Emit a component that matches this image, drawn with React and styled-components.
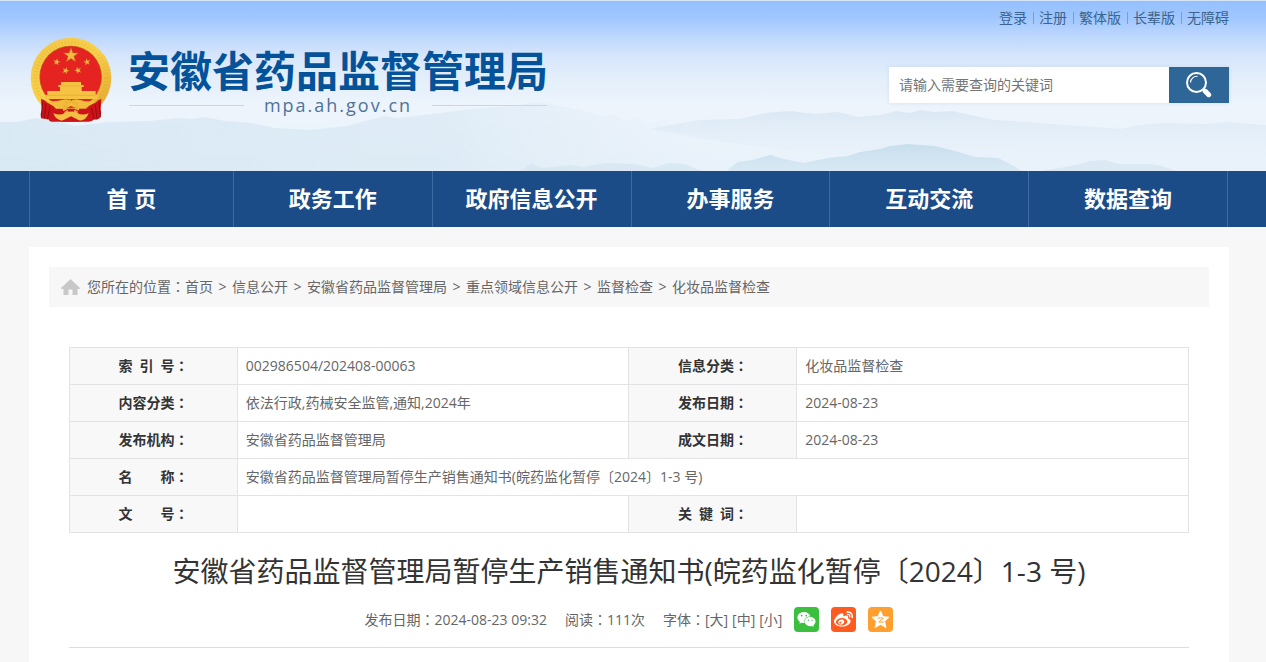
import React, { useState } from "react";
import styled, { createGlobalStyle } from "styled-components";
import { FaWeibo, FaWeixin } from "react-icons/fa";

const GlobalStyle = createGlobalStyle`
  * {
    box-sizing: border-box;
  }
  body {
    margin: 0;
    background: #f7f7f7;
    color: #666;
    font-family: "Open Sans", "Noto Sans CJK SC", sans-serif;
    font-size: 14px;
    line-height: 20px;
  }
  a {
    color: inherit;
    text-decoration: none;
  }
  button,
  input {
    font: inherit;
    color: inherit;
    border: none;
    padding: 0;
  }
  button {
    background: none;
    cursor: pointer;
  }
`;

const Page = styled.div`
  display: flex;
  flex-direction: column;
  min-height: 100vh;
`;
const Wrap = styled.div`
  width: 100%;
  max-width: 1258px;
  margin: 0 auto;
  padding: 0 29px;
`;
const Banner = styled.header`
  position: relative;
  padding-right: 8px;
  border-top: 1px solid #d3e4f7;
  background: linear-gradient(
    #95c0ff 0,
    #9fc6ff 16px,
    #bbd6fd 34px,
    #d5e5fb 54px,
    #e4effa 78px,
    #edf4fc 105px,
    #e9f2fa 170px
  );
`;
const Mountains = styled.svg`
  position: absolute;
  top: 0;
  left: 0;
  width: 100%;
  height: 100%;
`;
const BannerInner = styled.div`
  position: relative;
  display: flex;
  justify-content: space-between;
  min-height: 170px;
`;
const Brand = styled.a`
  display: flex;
  align-items: flex-start;
  gap: 16px;
  padding: 36px 0 0 1px;
`;
const SiteName = styled.div`
  padding-top: 10px;
  color: #04539a;
  font-size: 42px;
  font-weight: 700;
  line-height: 48px;
`;
const Domain = styled.div`
  display: flex;
  align-items: center;
  gap: 20px;
  padding: 0 1px;
  color: #4f7397;
  font-size: 18px;
  line-height: 20px;
  letter-spacing: 2px;

  &::before,
  &::after {
    content: "";
    flex: 1;
    height: 1px;
    background: #cfd6df;
  }
`;
const Tools = styled.div`
  display: flex;
  flex-direction: column;
  align-items: flex-end;
  gap: 39px;
  padding-top: 7px;
`;
const TopLinks = styled.nav`
  display: flex;
  align-items: center;
  color: #3b648e;

  a + a {
    display: flex;
    align-items: center;
  }
  a + a::before {
    content: "";
    width: 1px;
    height: 12px;
    margin: 0 5px 0 6px;
    background: #7f9fc4;
  }
`;
const SearchForm = styled.form`
  display: flex;
  height: 36px;
  box-shadow: 0 0 4px rgba(80, 110, 150, 0.14);
`;
const SearchInput = styled.input`
  width: 280px;
  padding: 0 10px;
  background: #fff;
  outline: none;

  &::placeholder {
    color: #757575;
    opacity: 1;
  }
`;
const SearchBtn = styled.button`
  display: flex;
  align-items: center;
  justify-content: center;
  width: 60px;
  background: #2f6698;
`;

const NavBar = styled.nav`
  padding-right: 8px;
  background: #1b4c88;
`;
const NavList = styled.ul`
  display: flex;
  margin: 0;
  padding: 0 1px 0 0;
  list-style: none;
`;
const NavItem = styled.li`
  flex: ${(props) => (props.$first ? 204 : 199)} 1 0;
  border-right: 1px solid #3f6aa0;
  border-left: ${(props) => (props.$first ? "1px solid #3f6aa0" : "none")};

  a {
    display: block;
    padding-bottom: 2px;
    color: #fff;
    font-size: 22px;
    font-weight: 700;
    line-height: 54px;
    text-align: center;
  }
`;

const Main = styled.main`
  display: flex;
  flex: 1;
  padding: 20px 8px 0 0;
`;
const Panel = styled.div`
  height: 100%;
  padding: 20px 20px 14px;
  background: #fff;
`;
const Crumbs = styled.nav`
  display: flex;
  align-items: center;
  gap: 5px;
  padding: 10px 12px;
  background: #f7f7f7;

  svg {
    margin-right: 2px;
  }
`;
const CrumbArrow = styled.span`
  width: 9px;
  text-align: center;
`;
// the SC font sets the full-width colon to the left, the JP one centers it
const ColonMark = styled.span`
  font-family: "Noto Sans CJK JP", sans-serif;
  line-height: 1;
`;
const Article = styled.article`
  padding: 40px 20px 0;
`;
const InfoTable = styled.table`
  width: 100%;
  table-layout: fixed;
  border-collapse: collapse;

  th,
  td {
    height: 37px;
    padding: 0 8px;
    border: 1px solid #e3e3e3;
  }
  th {
    background: #f8f8f8;
    color: #333;
    font-weight: 700;
    white-space: pre;
  }
`;
const Title = styled.h1`
  margin: 18px 0 0;
  color: #333;
  font-size: 28px;
  font-weight: 400;
  line-height: 40px;
  text-align: center;
`;
const Meta = styled.div`
  display: flex;
  align-items: center;
  justify-content: center;
  gap: 18px;
  padding: 16px 0 15px;
  border-bottom: 1px solid #ddd;
`;
const FontSizes = styled.div`
  display: flex;
  gap: 4px;
`;
const Share = styled.div`
  display: flex;
  gap: 12px;
  margin-left: -6px;
`;
const ShareBtn = styled.button`
  display: flex;
  align-items: center;
  justify-content: center;
  width: 25px;
  height: 25px;
  border-radius: 4px;
  background: ${(props) => props.$color};
  color: #fff;
  font-size: 19px;
`;

const star = "M0 -10 L2.4 -3.2 L9.5 -3.1 L3.8 1.2 L5.9 8.1 L0 4 L-5.9 8.1 L-3.8 1.2 L-9.5 -3.1 L-2.4 -3.2 Z";

const Emblem = () => (
  <svg width="82" height="87" viewBox="31 21 246 261" aria-hidden="true">
    <defs>
      <linearGradient id="gold" x1="0" y1="0" x2="1" y2="1">
        <stop offset="0" stopColor="#f3c545" />
        <stop offset="0.5" stopColor="#f8d24c" />
        <stop offset="1" stopColor="#e0a02b" />
      </linearGradient>
    </defs>
    <circle cx="154" cy="144" r="121" fill="url(#gold)" />
    <circle cx="154" cy="144" r="106" fill="none" stroke="#d99a27" strokeWidth="12" strokeDasharray="3 7" opacity="0.3" />
    <circle cx="153" cy="141" r="94" fill="#b9791d" />
    <circle cx="153" cy="141" r="92" fill="#e52421" />
    <g fill="#f3bb3d" stroke="#b8691d" strokeWidth="0.6">
      <path d={star} transform="translate(154 76) scale(2.3)" />
      <path d={star} transform="translate(111 96) rotate(10) scale(1.1)" />
      <path d={star} transform="translate(202 96) rotate(-10) scale(1.1)" />
      <path d={star} transform="translate(138 122) rotate(20) scale(1.1)" />
      <path d={star} transform="translate(175 121) rotate(-20) scale(1.1)" />
    </g>
    <path
      d="M124 156 h60 v8 l8 2 v5 h-6 v12 h42 v12 h6 v12 H75 v-12 h8 v-12 h38 v-12 h-5 v-5 l8 -2 Z"
      fill="#f6c343"
    />
    <path d="M120 168 h68 M84 196 h142" stroke="#d38b26" strokeWidth="1" fill="none" />
    <path d="M64 206 q30 12 45 30 h90 q16 -17 46 -30 l-2 34 q4 12 -3 25 q-9 6 -16 3 q-8 9 -22 7 H98 q-8 2 -12 -7 l-22 -3 q-3 -14 2 -26 Z" fill="#cf1419" />
    <path d="M69 214 l-3 46 M79 221 l-5 45 M91 230 l-8 38 M238 216 l4 46 M227 224 l5 43 M215 232 l9 36" stroke="#8f0c12" strokeWidth="3" fill="none" />
    <path d="M76 214 q34 2 54 -5 q12 -4 24 4 q12 -8 24 -4 q23 8 57 5 q-26 14 -45 19 q-20 4 -36 -5 q-18 10 -38 5 q-20 -5 -40 -19 Z" fill="#f2bd3b" />
    <circle cx="154" cy="233" r="19" fill="none" stroke="#edb237" strokeWidth="12" strokeDasharray="7 3" />
    <path d="M101 250 q22 8 34 -1 q19 -9 38 0 q14 9 34 1 q-8 22 -27 22 q-13 -1 -26 -9 q-15 10 -27 9 q-20 -2 -26 -22 Z" fill="#f3c043" />
    <path d="M121 275 l33 -16 l33 16 Z" fill="#cf1419" />
  </svg>
);

const MountainRange = () => (
  <Mountains viewBox="0 0 1266 170" preserveAspectRatio="none" aria-hidden="true">
    <defs>
      <linearGradient id="far" x1="0" y1="0" x2="0" y2="1">
        <stop offset="0" stopColor="#cfe0f0" stopOpacity="0.6" />
        <stop offset="1" stopColor="#dcebf7" stopOpacity="0" />
      </linearGradient>
      <linearGradient id="west" x1="0" y1="0" x2="1" y2="0">
        <stop offset="0" stopColor="#d0e4f1" stopOpacity="0.65" />
        <stop offset="0.6" stopColor="#d3e5f2" stopOpacity="0.5" />
        <stop offset="1" stopColor="#e6eff8" stopOpacity="0" />
      </linearGradient>
      <linearGradient id="near" x1="0" y1="0" x2="0" y2="1">
        <stop offset="0" stopColor="#c9deee" />
        <stop offset="1" stopColor="#d8e9f4" />
      </linearGradient>
    </defs>
    <path
      d="M0 121 L18 121 L36 117 L52 119 L75 125 L110 121 L150 120 L178 117 L192 118 L204 116 L225 120 L252 122 L275 127 L310 129 L347 125 L362 121 L385 115 L398 117 L440 112 L470 108 L500 106 L520 104 L535 101 L550 103 L575 108 L592 112 L600 115 L614 114 L626 120 L636 117 L648 122 L662 120 L690 128 L712 124 L740 132 L760 170 L0 170 Z"
      fill="url(#west)"
    />
    <path
      d="M650 128 L676 123 L700 119 L740 118 L765 112 L790 110 L815 113 L838 111 L858 116 L880 114 L896 110 L910 112 L920 109 L935 111 L952 110 L970 114 L995 119 L1040 122 L1120 128 L1140 124 L1165 122 L1205 123 L1225 121 L1266 124 L1266 160 L900 160 Q760 150 650 128 Z"
      fill="url(#far)"
    />
    <path
      d="M726 170 L738 161 L752 159 L770 154 L784 158 L803 162 L828 157 L848 155 L860 151 L880 148 L890 145 L908 143 L935 145 L955 150 L975 156 L998 157 L1012 164 L1022 170 Z"
      fill="url(#near)"
    />
    <path
      d="M1040 170 L1066 166 L1080 163 L1090 160 L1105 159 L1118 163 L1148 163 L1162 165 L1176 170 Z M520 170 L531 163 L542 167 L570 164 L582 166 L605 162 L635 163 L653 167 L668 162 L684 163 L702 170 Z"
      fill="#d4e6f2"
      opacity="0.75"
    />
  </Mountains>
);

const SearchIcon = () => (
  <svg width="26" height="26" viewBox="0 0 26 26" fill="none" stroke="#fff" aria-hidden="true">
    <circle cx="10.5" cy="10.5" r="9.5" strokeWidth="2" />
    <path d="M4.5 10.5 A6.4 6.4 0 0 1 11.5 4.3" strokeWidth="1.2" />
    <path d="M17 17 L19 19" strokeWidth="2" />
    <path d="M19.3 19.3 L22.7 22.7" strokeWidth="5" strokeLinecap="round" />
  </svg>
);

const HomeIcon = () => (
  <svg width="19" height="17" viewBox="0 0 19 17" fill="#c8c8c8" aria-hidden="true">
    <path d="M9.5 0 L19 9 Q19 10 18 10 H16.5 V16 H11.5 V10.5 H7.5 V16 H2.5 V10 H1 Q0 10 0 9 Z" />
  </svg>
);

const QzoneIcon = () => (
  <svg width="19" height="19" viewBox="0 0 20 20" aria-hidden="true">
    <path
      d="M10 1 L12.7 7 L19 7.6 L14.3 12 L15.7 18.4 L10 15.2 L4.3 18.4 L5.7 12 L1 7.6 L7.3 7 Z"
      fill="#fff"
      stroke="#fff"
      strokeLinejoin="round"
    />
    <path d="M6.8 8.6 Q10 7.8 13 8.7 L8.2 12.6 Q11 13.2 13.6 12.7" fill="none" stroke="#ff9f30" strokeWidth="1" />
  </svg>
);

const Colon = () => <ColonMark>：</ColonMark>;

const topLinks = ["登录", "注册", "繁体版", "长辈版", "无障碍"];
const navItems = ["首 页", "政务工作", "政府信息公开", "办事服务", "互动交流", "数据查询"];
const crumbs = ["首页", "信息公开", "安徽省药品监督管理局", "重点领域信息公开", "监督检查", "化妆品监督检查"];
const docTitle = "安徽省药品监督管理局暂停生产销售通知书(皖药监化暂停〔2024〕1-3 号)";

// one entry per table row: label, value, label, value
const rows = [
  ["索\u2002引\u2002号", "002986504/202408-00063", "信息分类", "化妆品监督检查"],
  ["内容分类", "依法行政,药械安全监管,通知,2024年", "发布日期", "2024-08-23"],
  ["发布机构", "安徽省药品监督管理局", "成文日期", "2024-08-23"],
  ["名\u3000\u3000称", docTitle],
  ["文\u3000\u3000号", "", "关\u2002键\u2002词", ""],
];

const App = () => {
  const [keyword, setKeyword] = useState("");

  const handleSearch = (e) => {
    e.preventDefault();
  };

  return (
    <Page>
      <GlobalStyle />
      <Banner>
        <MountainRange />
        <Wrap>
          <BannerInner>
            <Brand href="#">
              <Emblem />
              <div>
                <SiteName>安徽省药品监督管理局</SiteName>
                <Domain>mpa.ah.gov.cn</Domain>
              </div>
            </Brand>
            <Tools>
              <TopLinks>
                {topLinks.map((text) => (
                  <a href="#" key={text}>
                    {text}
                  </a>
                ))}
              </TopLinks>
              <SearchForm onSubmit={handleSearch}>
                <SearchInput
                  aria-label="请输入需要查询的关键词"
                  placeholder="请输入需要查询的关键词"
                  value={keyword}
                  onChange={(e) => setKeyword(e.target.value)}
                />
                <SearchBtn type="submit" aria-label="搜索">
                  <SearchIcon />
                </SearchBtn>
              </SearchForm>
            </Tools>
          </BannerInner>
        </Wrap>
      </Banner>
      <NavBar>
        <Wrap>
          <NavList>
            {navItems.map((text, i) => (
              <NavItem key={text} $first={i === 0}>
                <a href="#">{text}</a>
              </NavItem>
            ))}
          </NavList>
        </Wrap>
      </NavBar>
      <Main>
        <Wrap>
          <Panel>
            <Crumbs>
              <HomeIcon />
              {crumbs.map((text, i) => (
                <React.Fragment key={text}>
                  {i > 0 && <CrumbArrow>&gt;</CrumbArrow>}
                  <span>
                    {i === 0 && (
                      <>
                        您所在的位置
                        <Colon />
                      </>
                    )}
                    <a href="#">{text}</a>
                  </span>
                </React.Fragment>
              ))}
            </Crumbs>
            <Article>
              <InfoTable>
                <colgroup>
                  <col width="15%" />
                  <col width="35%" />
                  <col width="15%" />
                  <col width="35%" />
                </colgroup>
                <tbody>
                  {rows.map(([label, value, label2, value2]) => (
                    <tr key={label}>
                      <th scope="row">
                        {label}
                        <Colon />
                      </th>
                      <td colSpan={label2 ? 1 : 3}>{value}</td>
                      {label2 && (
                        <th scope="row">
                          {label2}
                          <Colon />
                        </th>
                      )}
                      {label2 && <td>{value2}</td>}
                    </tr>
                  ))}
                </tbody>
              </InfoTable>
              <Title>{docTitle}</Title>
              <Meta>
                <span>
                  发布日期
                  <Colon />
                  2024-08-23 09:32
                </span>
                <span>
                  阅读
                  <Colon />
                  111次
                </span>
                <FontSizes>
                  <span>
                    字体
                    <Colon />
                    <button type="button">[大]</button>
                  </span>
                  <button type="button">[中]</button>
                  <button type="button">[小]</button>
                </FontSizes>
                <Share>
                  <ShareBtn type="button" aria-label="微信" $color="#3bbf3f">
                    <FaWeixin />
                  </ShareBtn>
                  <ShareBtn type="button" aria-label="微博" $color="#ff5a1f">
                    <FaWeibo />
                  </ShareBtn>
                  <ShareBtn type="button" aria-label="QQ空间" $color="#ff9f30">
                    <QzoneIcon />
                  </ShareBtn>
                </Share>
              </Meta>
            </Article>
          </Panel>
        </Wrap>
      </Main>
    </Page>
  );
};

export default App;
